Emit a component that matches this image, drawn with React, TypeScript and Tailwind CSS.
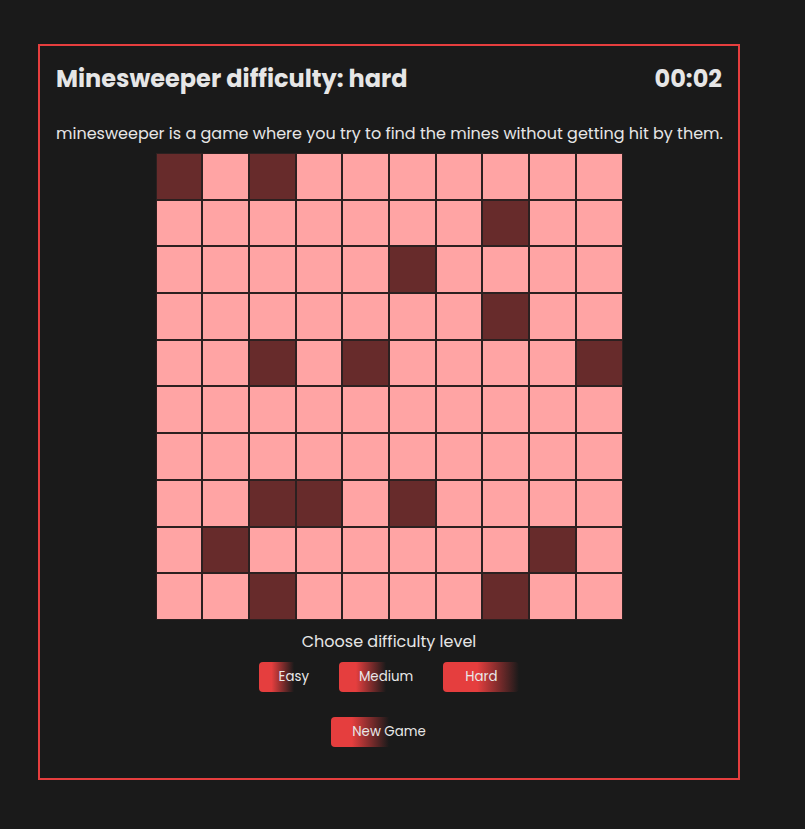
import { useEffect, useState } from "react";

const SIZE = 10;

// mine layout from the current board
const MINES: [number, number][] = [
  [0, 0], [0, 2],
  [1, 7],
  [2, 5],
  [3, 7],
  [4, 2], [4, 4], [4, 9],
  [7, 2], [7, 3], [7, 5],
  [8, 1], [8, 8],
  [9, 2], [9, 7],
];

const isMine = (r: number, c: number) => MINES.some(([mr, mc]) => mr === r && mc === c);

export default function App() {
  const [difficulty, setDifficulty] = useState<"easy" | "medium" | "hard">("hard");
  const [seconds, setSeconds] = useState(2);

  useEffect(() => {
    // keep the clock frozen for the screenshot
    setSeconds(2);
  }, [difficulty]);

  const mm = String(Math.floor(seconds / 60)).padStart(2, "0");
  const ss = String(seconds % 60).padStart(2, "0");

  const btn = (level: "easy" | "medium" | "hard", label: string) => (
    <button
      key={level}
      onClick={() => setDifficulty(level)}
      className={`h-[30px] rounded-[4px] text-[13.333px] text-[#e8e8e8] ${
        difficulty === level
          ? "px-[22px] bg-[linear-gradient(90deg,#e53e3e_45%,transparent_100%)]"
          : "px-[20px] bg-[linear-gradient(90deg,#e53e3e_18%,transparent_50%)]"
      }`}>
      {label}
    </button>
  );

  return (
    <div
      className="min-h-screen bg-[#1a1a1a] pt-[44px] pl-[38px] text-[#e6e6e6]"
      style={{ fontFamily: '"Poppins", "Open Sans", sans-serif' }}>
      <div className="w-[702px] h-[736px] border-2 border-[#e53e3e] px-4 flex flex-col items-center">
        <div className="w-full flex justify-between items-center mt-[17px] h-[32px]">
          <h1 className="text-[24px] font-bold leading-[32px]">Minesweeper difficulty: {difficulty}</h1>
          <span className="text-[24px] font-bold leading-[32px]">{mm}:{ss}</span>
        </div>

        <p className="w-full mt-[27px] text-[16px] leading-[24px] text-center whitespace-nowrap">
          minesweeper is a game where you try to find the mines without getting hit by them.
        </p>

        <div className="mt-[7px] w-[467px] grid grid-cols-10">
          {Array.from({ length: SIZE * SIZE }, (_, i) => {
            const r = Math.floor(i / SIZE);
            const c = i % SIZE;
            return (
              <div
                key={i}
                className={`h-[46.7px] border border-[#2c2020] ${
                  isMine(r, c) ? "bg-[#672b2b]" : "bg-[#ffa4a4]"
                }`}
              />
            );
          })}
        </div>

        <p className="mt-[10px] text-[16px] leading-[24px]">Choose difficulty level</p>

        <div className="mt-[8px] flex gap-[10px]">
          {btn("easy", "Easy")}
          {btn("medium", "Medium")}
          {btn("hard", "Hard")}
        </div>

        <button className="mt-[25px] h-[30px] px-[21px] rounded-[4px] text-[13.333px] text-[#e8e8e8] bg-[linear-gradient(90deg,#e53e3e_18%,transparent_50%)]">
          New Game
        </button>
      </div>
    </div>
  );
}
